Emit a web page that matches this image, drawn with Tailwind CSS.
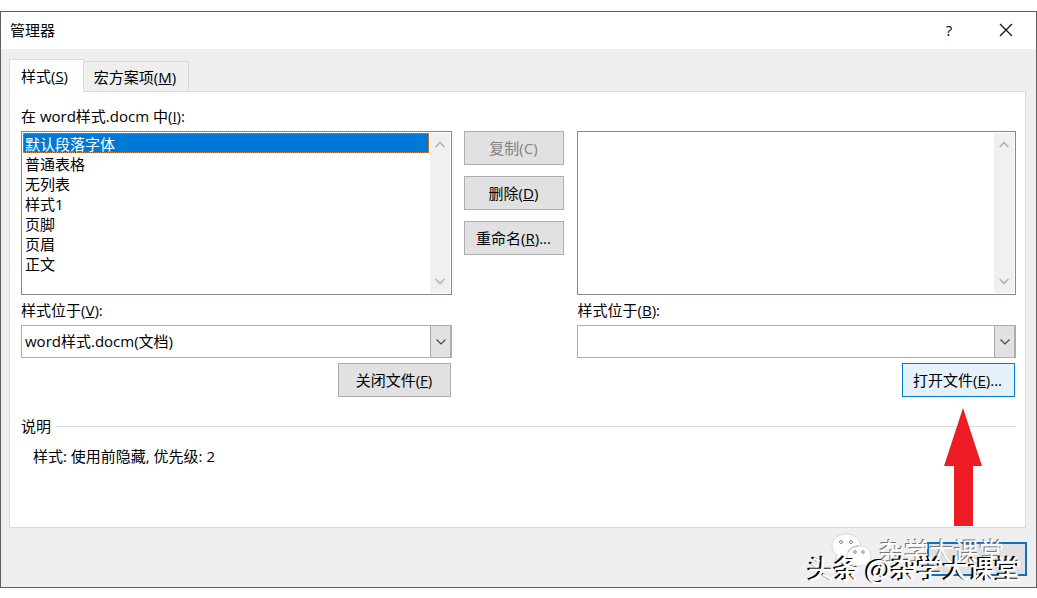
<!DOCTYPE html>
<html lang="zh-CN">
  <head>
    <meta charset="UTF-8" />
    <meta name="viewport" content="width=device-width, initial-scale=1.0" />
    <title>管理器</title>
    <script src="https://cdn.jsdelivr.net/npm/@tailwindcss/browser@4"></script>
  </head>
  <body class="bg-white pt-[11px] font-['Open_Sans','Noto_Sans_CJK_SC',sans-serif] text-[15px] leading-5 text-black">
    <div class="relative border border-[#5f5f61] bg-[#efefef] pb-[11px]">
      <!-- title bar -->
      <header class="flex h-[37px] items-center bg-white pb-0.5 pl-[9px] pr-[23px]">
        <h1 class="flex-1">管理器</h1>
        <button type="button" aria-label="帮助" class="mr-[42px] w-4 text-center font-medium">?</button>
        <button type="button" aria-label="关闭" class="size-[14px]">
          <svg viewBox="0 0 14 14" class="size-[14px]" fill="none" stroke="#111" stroke-width="1.2"><path d="M1 1 13 13M13 1 1 13" /></svg>
        </button>
      </header>

      <!-- tabs -->
      <div class="flex items-end px-2 pt-[10px]" role="tablist">
        <button type="button" role="tab" aria-selected="true" class="z-10 -mb-px h-[33px] w-[75px] border border-b-0 border-[#d9d9d9] bg-white pr-1">样式(<u>S</u>)</button>
        <button type="button" role="tab" class="h-[30px] w-[105px] border border-b-0 border-l-0 border-[#d9d9d9] bg-[#efefef] pr-0.5">宏方案项(<u>M</u>)</button>
      </div>

      <main class="mr-[10px] ml-2 h-[437px] border border-[#d9d9d9] bg-white pl-[11px] pr-[9px] pt-[14px]">
        <div class="grid grid-cols-[431fr_100px_439fr] gap-x-3">
          <section>
            <label for="from-list" class="block h-5">在 word样式.docm 中(<u>I</u>):</label>
            <div class="mt-[5px] flex h-[164px] border border-[#828790] p-px">
              <select id="from-list" size="7" class="min-w-0 flex-1 appearance-none overflow-hidden outline-none [&>option]:h-5 [&>option]:min-h-5 [&>option]:px-0.5 [&>option]:py-0 [&>option]:leading-4">
                <option selected class="bg-linear-to-r from-[#0078d7] to-[#0078d7] outline outline-dotted -outline-offset-1 outline-[#d08a45] [-webkit-text-fill-color:white]">默认段落字体</option>
                <option>普通表格</option>
                <option>无列表</option>
                <option>样式1</option>
                <option>页脚</option>
                <option>页眉</option>
                <option>正文</option>
              </select>
              <div class="ml-px flex w-5 flex-col items-center justify-between bg-[#f0f0f0] py-2">
                <svg viewBox="0 0 10 7" class="h-[7px] w-[10px]" fill="none" stroke="#b5b5b5" stroke-width="1.8"><path d="M.7 6 5 1.5 9.3 6" /></svg>
                <svg viewBox="0 0 10 7" class="h-[7px] w-[10px]" fill="none" stroke="#b5b5b5" stroke-width="1.8"><path d="M.7 1 5 5.5 9.3 1" /></svg>
              </div>
            </div>
            <label for="from-file" class="mt-[5px] block">样式位于(<u>V</u>):</label>
            <div class="relative mt-[5px]">
              <select id="from-file" class="block h-[33px] w-full appearance-none border border-[#acacac] bg-white pb-0.5 pl-[3px]">
                <option>word样式.docm(文档)</option>
              </select>
              <span class="pointer-events-none absolute inset-y-0 right-0 flex w-[22px] items-center justify-center border border-r-2 border-[#acacac] bg-[#e1e1e1]">
                <svg viewBox="0 0 10 6" class="h-[6px] w-[10px]" fill="none" stroke="#444" stroke-width="1.1"><path d="M.5.5 5 5 9.5.5" /></svg>
              </span>
            </div>
            <button type="button" class="mr-px mt-[5px] ml-auto block h-[34px] w-[113px] border border-[#adadad] bg-[#e1e1e1] pr-0.5">关闭文件(<u>F</u>)</button>
          </section>

          <div class="flex flex-col gap-[11px] pt-[25px]">
            <button type="button" disabled class="h-[34px] border border-[#adadad] bg-[#e1e1e1] pr-0.5 text-[#838383]">复制(C)</button>
            <button type="button" class="h-[34px] border border-[#adadad] bg-[#e1e1e1] pr-0.5">删除(<u>D</u>)</button>
            <button type="button" class="h-[34px] border border-[#adadad] bg-[#e1e1e1] pr-0.5">重命名(<u>R</u>)...</button>
          </div>

          <section class="pl-px">
            <div class="h-5"></div>
            <div class="mt-[5px] flex h-[164px] border border-[#828790] p-px">
              <select size="7" aria-label="目标样式" class="min-w-0 flex-1 appearance-none overflow-hidden outline-none"></select>
              <div class="ml-px flex w-5 flex-col items-center justify-between bg-[#f0f0f0] py-2">
                <svg viewBox="0 0 10 7" class="h-[7px] w-[10px]" fill="none" stroke="#b5b5b5" stroke-width="1.8"><path d="M.7 6 5 1.5 9.3 6" /></svg>
                <svg viewBox="0 0 10 7" class="h-[7px] w-[10px]" fill="none" stroke="#b5b5b5" stroke-width="1.8"><path d="M.7 1 5 5.5 9.3 1" /></svg>
              </div>
            </div>
            <label for="to-file" class="mt-[5px] block">样式位于(<u>B</u>):</label>
            <div class="relative mt-[5px]">
              <select id="to-file" class="block h-[33px] w-full appearance-none border border-[#acacac] bg-white pl-[3px]"></select>
              <span class="pointer-events-none absolute inset-y-0 right-0 flex w-[22px] items-center justify-center border border-r-2 border-[#acacac] bg-[#e1e1e1]">
                <svg viewBox="0 0 10 6" class="h-[6px] w-[10px]" fill="none" stroke="#444" stroke-width="1.1"><path d="M.5.5 5 5 9.5.5" /></svg>
              </span>
            </div>
            <button type="button" class="mr-px mt-[5px] ml-auto block h-[34px] w-[113px] border border-[#0078d7] bg-[#e5f1fb] pr-0.5">打开文件(<u>E</u>)...</button>
          </section>
        </div>

        <div class="mt-[19px] flex items-center gap-[5px]">
          <h2>说明</h2>
          <hr class="flex-1 border-[#dcdcdc]" />
        </div>
        <p class="mt-[10px] pl-3">样式: 使用前隐藏, 优先级: 2</p>
      </main>

      <footer class="mr-[9px] mt-[14px] flex justify-end">
        <button type="button" aria-label="关闭" class="h-[34px] w-[100px] border-2 border-[#0f70c4] bg-[#e1e1e1]"></button>
      </footer>

      <!-- arrow over the open button -->
      <svg viewBox="0 0 38 118" class="absolute right-[54px] bottom-[61px] h-[118px] w-[38px]" fill="#ed1c24"><path d="M19 0 38 58H29V118H10V58H0z" /></svg>

      <!-- watermarks -->
      <div class="pointer-events-none absolute right-[32px] bottom-[18px] flex items-center gap-1.5">
        <svg viewBox="0 0 42 36" class="h-9 w-[42px]" fill="#fff" stroke="#c4c4c4" stroke-width=".6">
          <path d="M15 1C7 1 1 6 1 13c0 4 2 7 5 9l-1.500 5 5-3c2 .6 4 .8 6 .8 8 0 14-5 14-12S23 1 15 1z" />
          <path d="M28 13c-7 0-12 4-12 10s5 10 12 10c2 0 4-.3 5-.8l4 2.500-1-4c3-2 4-4.500 4-7.700 0-6-5-10-12-10z" />
          <path d="M17 19c2-4 6-6 11-6" fill="none" stroke="#888" />
          <g fill="#fff" stroke="#888" stroke-width="1"><circle cx="10" cy="9" r="1.500" /><circle cx="20" cy="9" r="1.500" /><circle cx="24" cy="19" r="1.300" /><circle cx="32" cy="19" r="1.300" /></g>
        </svg>
        <span class="text-[25px] leading-8 text-white [text-shadow:-1px_-1px_0_#777]">杂学大课堂</span>
      </div>
      <div class="pointer-events-none absolute right-[15px] bottom-[3px] font-['Noto_Sans_CJK_SC',sans-serif] text-[26px] leading-8 font-medium text-white [text-shadow:-2px_-1px_0_#000]">头条 @杂学大课堂</div>
    </div>
  </body>
</html>
